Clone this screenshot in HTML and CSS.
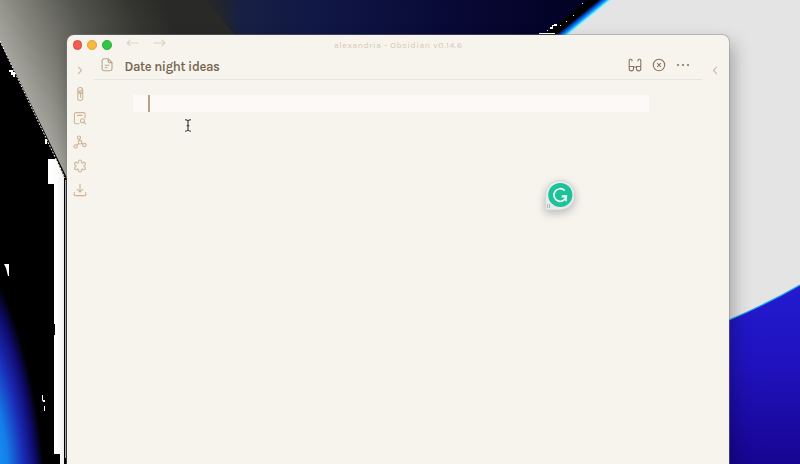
FILE: index.html
```html
<!DOCTYPE html>
<html lang="en">
<head>
<meta charset="utf-8">
<title>alexandria - Obsidian v0.14.6</title>
<link rel="stylesheet" href="styles.css">
</head>
<body>
<svg class="wallpaper" viewBox="0 0 800 464" aria-hidden="true">
  <defs>
    <linearGradient id="metal" gradientUnits="userSpaceOnUse" x1="0" y1="45" x2="150" y2="-25">
      <stop offset="0" stop-color="#a9a8a0"/><stop offset=".2" stop-color="#85857d"/><stop offset=".5" stop-color="#55564f"/><stop offset=".8" stop-color="#363732"/><stop offset="1" stop-color="#292a27"/>
    </linearGradient>
    <linearGradient id="navy" gradientUnits="userSpaceOnUse" x1="200" y1="15" x2="560" y2="-15">
      <stop offset="0" stop-color="#20211f" stop-opacity="0"/><stop offset=".11" stop-color="#172044"/><stop offset=".35" stop-color="#101644"/><stop offset=".75" stop-color="#070733"/><stop offset="1" stop-color="#030328"/>
    </linearGradient>
    <linearGradient id="edge" gradientUnits="userSpaceOnUse" x1="570" y1="13" x2="581" y2="26.5">
      <stop offset="0" stop-color="#030325"/><stop offset=".12" stop-color="#000"/><stop offset=".45" stop-color="#000"/><stop offset=".58" stop-color="#0638bd"/><stop offset=".74" stop-color="#08a3f5"/><stop offset=".88" stop-color="#a9f5fb"/><stop offset="1" stop-color="#e4e4e4"/>
    </linearGradient>
    <linearGradient id="blue" x1="0" y1="0" x2="0" y2="1">
      <stop offset="0" stop-color="#231bd0"/><stop offset=".45" stop-color="#2012bd"/><stop offset="1" stop-color="#170591"/>
    </linearGradient>
    <radialGradient id="glow" gradientUnits="userSpaceOnUse" cx="0" cy="0" r="1" gradientTransform="translate(-10 450) rotate(-7) scale(52 200)">
      <stop offset="0" stop-color="#159bf8"/><stop offset=".32" stop-color="#147de8"/><stop offset=".62" stop-color="#1a2bb5"/><stop offset=".83" stop-color="#100c70"/><stop offset="1" stop-color="#000"/>
    </radialGradient>
  </defs>
  <rect width="800" height="464" fill="#000"/>
  <path d="M0 0H240V70H68V180L0 41Z" fill="url(#metal)"/>
  <path d="M205 0H610L565 40H240Z" fill="url(#navy)"/>
  <path d="M611 0H800V464H700L565 36Z" fill="#e4e4e4"/>
  <path d="M584 0H613L569 36H543Z" fill="url(#edge)"/>
  <path d="M0 240H54V464H0Z" fill="url(#glow)"/>
  <path d="M800 285Q767 304 729 320V464H800Z" fill="url(#blue)"/>
  <path d="M800 285Q767 304 729 320" fill="none" stroke="#18a9e8" stroke-width="1.3"/>
  <path d="M0 41L65 178" fill="none" stroke="#fff" stroke-dasharray="2 1.5"/>
  <path d="M48 159H56L64 177V464H60V454H54V335H55V324H54V184H48Z" fill="#fff"/>
  <path d="M4 264H9V276H8L6 268ZM42 395H43V400H45V402H43L42 400ZM44 406H45V411H44ZM9 70H13V72H15V77H13V75H11V72H9ZM45 139H47V144H45ZM539 33H555V34H539ZM550 27H552V25H554V24H557V26H553V29H550ZM582 3H583V4H582ZM573 15H574V16H573ZM566 21H567V22H566ZM547 30H548V31H547ZM560 25H561V26H560Z" fill="#fff"/>
  <path d="M65.5 180V458" stroke="#fff" stroke-width=".7"/>
</svg>

<main class="window">
  <header class="titlebar">
    <div class="controls">
      <div class="lights"><i class="light red"></i><i class="light yellow"></i><i class="light green"></i></div>
      <svg class="arrows" viewBox="0 0 40 10"><path d="M12.5 5H1.2M4.3 1.9L1.2 5l3.1 3.1M27.5 5h11.3M35.7 1.9L38.8 5l-3.1 3.1"/></svg>
    </div>
    <div class="app-title">alexandria - Obsidian v0.14.6</div>
  </header>
  <div class="workspace">
    <nav class="ribbon">
      <svg viewBox="0 0 16 16"><path d="M6.5 5l3 3.3-3 3.3"/></svg>
      <svg viewBox="0 0 16 16"><path d="M5.7 5.7V4a2.5 2.5 0 0 1 5 0v8a2.5 2.5 0 0 1-5 0V7.4a1.4 1.4 0 0 1 2.8 0v4M5.8 5.8L10.5 3.8M8.5 8l2-1V5.5l-3.6 2"/></svg>
      <svg viewBox="0 0 16 16"><path d="M7 13.8H4a1.6 1.6 0 0 1-1.6-1.6V4.2A1.6 1.6 0 0 1 4 2.6h7.5a1.6 1.6 0 0 1 1.6 1.6v3.5M5.6 5.4H10M12 12.3l1.7 1.6"/><circle cx="10.5" cy="10.8" r="2"/></svg>
      <svg viewBox="0 0 16 16"><circle cx="7" cy="3.6" r="1.6"/><circle cx="8" cy="8.2" r="1.8"/><circle cx="3.6" cy="12.4" r="1.6"/><circle cx="12.4" cy="11" r="1.7"/><path d="M7.2 5.2l.4 1.2M6.7 9.5l-1.9 1.8M9.7 9.1l1.2.9"/></svg>
      <svg viewBox="0 0 16 16"><path d="M6.5 4.2a1.6 1.6 0 1 1 3 0q.2 1 1.1.7a1.6 1.6 0 1 1 1.5 2.6q-.7.5 0 1a1.6 1.6 0 1 1-1.5 2.6q-.9-.3-1.1.7a1.6 1.6 0 1 1-3 0q-.2-1-1.1-.7a1.6 1.6 0 1 1-1.5-2.6q.7-.5 0-1a1.6 1.6 0 1 1 1.5-2.6q.9.3 1.1-.7Z"/></svg>
      <svg viewBox="0 0 16 16"><path d="M8 2v8M5.2 7.4L8 10.2l2.8-2.8M2.2 10.5v2.1q0 1 1 1h9.6q1 0 1-1v-2.1"/></svg>
    </nav>
    <section class="pane">
      <header class="note-head">
        <svg class="file" viewBox="0 0 12 14"><path d="M7.2.8H3A1.9 1.9 0 0 0 1.1 2.7v8.1A1.9 1.9 0 0 0 3 12.7h6.1a1.9 1.9 0 0 0 1.9-1.9V4.6ZM7.2.8v2.5q0 1.3 1.3 1.3H11M3.7 7.3h4.7M3.7 9.8h2.9"/></svg>
        <h1>Date night ideas</h1>
        <div class="actions">
          <svg viewBox="0 0 14 14"><path d="M4 3.2V2.3q0-1-1-1h-.8q-1 0-1 1v8M10 3.2V2.3q0-1 1-1h.8q1 0 1 1v8M1.2 8.5h4.3v2.2a2.1 2.1 0 0 1-4.3 0ZM8.5 8.5h4.3v2.2a2.1 2.1 0 0 1-4.3 0ZM5.5 9.4q1.5-.9 3 0"/></svg>
          <svg viewBox="0 0 14 14"><circle cx="7" cy="7" r="5.7"/><path d="M5.2 5.2l3.6 3.6M8.8 5.2L5.2 8.8"/></svg>
          <svg class="dots" viewBox="0 0 14 14"><circle cx="2" cy="7" r="1.1"/><circle cx="7" cy="7" r="1.1"/><circle cx="12" cy="7" r="1.1"/></svg>
        </div>
      </header>
      <div class="editor"><div class="active-line"><i class="caret"></i></div></div>
    </section>
    <aside class="right-ribbon"><svg viewBox="0 0 16 16"><path d="M9.5 5l-3 3.3 3 3.3"/></svg></aside>
  </div>
</main>

<svg class="pointer" viewBox="0 0 8 13"><path d="M1 .8q2.2 0 3 1.2.8-1.2 3-1.2M4 2v9M1 12.2q2.2 0 3-1.2.8 1.2 3 1.2M2.6 6.8h2.8"/></svg>
<svg class="assistant" viewBox="0 0 32 32">
  <path d="M1.3 30V15.2A14.8 14.8 0 1 1 16.2 30Z" fill="#e7ebea" stroke="#d0d1d2" stroke-width=".8"/>
  <circle cx="16.3" cy="15" r="12.1" fill="#1dc19a"/>
  <path d="M20.7 10.6A6.3 6.3 0 1 0 22.4 16.2H18M22 21.3v-4.6h-4.4" fill="none" stroke="#effcf8" stroke-width="1.7"/>
  <path d="M3.6 24v4M5.6 24v4" stroke="#b4b8bb"/>
</svg>
</body>
</html>
```
FILE: styles.css
```css
* { box-sizing: border-box; }
body {
  margin: 0;
  width: 800px;
  height: 464px;
  overflow: hidden;
  position: relative;
  background: #000;
  font-family: Karla, Inter, "Liberation Sans", sans-serif;
}
svg { display: block; }
.wallpaper { position: absolute; inset: 0; width: 800px; height: 464px; }
.window {
  position: relative;
  width: 662px;
  height: 445px;
  margin: 35px 0 0 67px;
  display: flex;
  flex-direction: column;
  background: #f7f4ed;
  border-radius: 7px;
  box-shadow: 0 0 0 1px rgba(130, 130, 130, .4), 4px 8px 18px rgba(0, 0, 0, .3);
}
.titlebar { height: 20px; display: grid; grid-template-columns: 1fr auto 1fr; align-items: center; }
.controls { display: flex; align-items: center; gap: 14px; padding-left: 5.5px; }
.lights { display: flex; gap: 5.4px; }
.light { width: 9.6px; height: 9.6px; border-radius: 50%; }
.red { background: #f45b52; border: .5px solid #d7473f; }
.yellow { background: #f7ba3c; border: .5px solid #dfa22c; }
.green { background: #34c448; border: .5px solid #28ac38; }
.arrows { width: 40px; height: 10px; margin-top: -4px; }
.arrows path { fill: none; stroke: #e0d1c0; stroke-width: 1.2; }
.app-title { color: #d9c8b2; font-size: 8.8px; letter-spacing: .52px; width: 128px; margin-top: -1px; white-space: nowrap; }
.workspace { display: grid; grid-template-columns: 27px 1fr 27px; flex: 1; }
.ribbon { display: flex; flex-direction: column; align-items: center; gap: 8px; padding: 6.6px 1px 0 0; }
.ribbon svg, .right-ribbon svg {
  width: 16px;
  height: 16px;
  fill: none;
  stroke: #cdb59a;
  stroke-width: 1.1;
  stroke-linecap: round;
  stroke-linejoin: round;
}
.right-ribbon { padding: 6.6px 0 0 5px; }
.note-head { height: 25px; display: flex; align-items: center; padding: 0 12px 4px 7px; border-bottom: 1.5px solid #e7e4df; }
.file { width: 12px; height: 14px; margin-top: 0; fill: none; stroke: #b7a48c; stroke-width: 1.1; }
h1 { margin: 4px 0 0 11.5px; color: #756550; font-size: 13px; line-height: 18px; font-weight: 600; letter-spacing: -.35px; }
.actions { margin-left: auto; display: flex; gap: 10px; }
.actions svg { width: 14px; height: 14px; fill: none; stroke: #87755e; stroke-width: 1.1; stroke-linejoin: round; }
.actions .dots { fill: #87755e; stroke: none; }
.editor { padding: 14.5px 53px 0 39px; }
.active-line { height: 17.5px; padding-left: 15px; background: #fcf9f6; }
.caret { display: block; width: 1.6px; height: 17.5px; background: #b5a38e; }
.pointer { position: absolute; left: 184px; top: 119px; width: 8px; height: 13px; fill: none; stroke: #343434; stroke-width: 1.1; }
.assistant { position: absolute; left: 544px; top: 180px; width: 32px; height: 32px; filter: drop-shadow(0 3px 4px rgba(70, 75, 95, .34)); }
```
